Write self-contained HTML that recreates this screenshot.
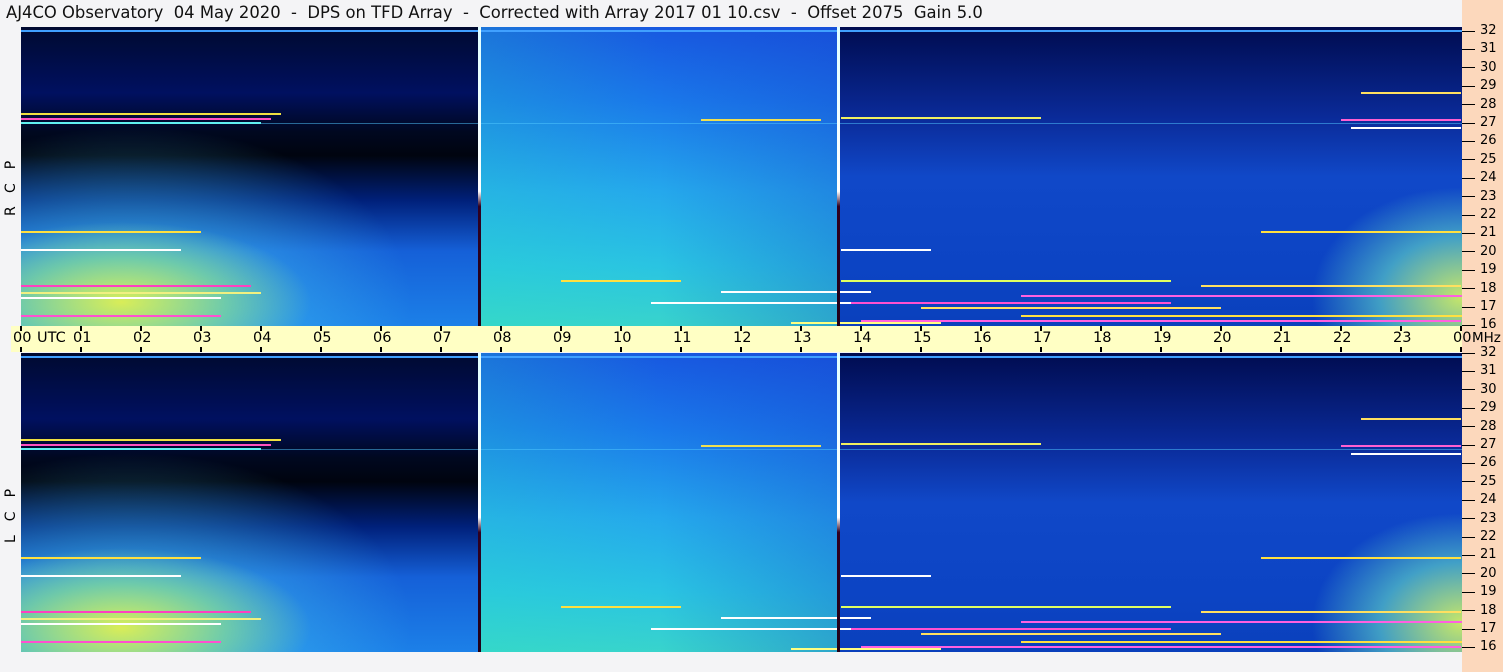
<!DOCTYPE html>
<html><head><meta charset="utf-8"><style>
*{margin:0;padding:0}
body{width:1503px;height:672px;background:#f4f4f6;position:relative;overflow:hidden;font-family:"DejaVu Sans","Liberation Sans",sans-serif}
.t{position:absolute;left:6px;top:3px;font-size:16.4px;color:#111;white-space:pre}
.spec{position:absolute;left:21px;width:1441px;height:299px;overflow:hidden}
.a{position:absolute;left:0;top:0;width:458px;height:100%;
background:
radial-gradient(ellipse 190px 80px at 100px 275px,rgba(225,240,80,.95),rgba(150,230,130,.6) 55%,rgba(60,170,240,0) 100%),
radial-gradient(ellipse 280px 170px at 110px 270px,rgba(70,200,240,.8),rgba(40,120,230,0) 100%),
linear-gradient(#000a30 0%,#001060 22%,#000820 35%,#00040f 43%,#00207a 58%,#1560d8 75%,#1c80e8 100%)}
.b{position:absolute;left:460px;top:0;width:357px;height:100%;
background:linear-gradient(#1858e0 0%,#1a78ea 25%,#25a8ec 55%,#2ac4e2 80%,#38d4cc 100%)}
.b2{position:absolute;left:460px;top:0;width:357px;height:100%;background:linear-gradient(90deg,rgba(40,230,190,.2),rgba(0,0,0,0) 50%,rgba(20,60,200,.3))}
.c{position:absolute;left:819px;top:0;width:622px;height:100%;
background:
radial-gradient(ellipse 150px 110px at 622px 270px,rgba(210,240,100,.95),rgba(100,220,200,.6) 55%,rgba(40,150,240,0) 100%),
linear-gradient(#000c50 0%,#0a2a98 30%,#1048c8 50%,#0c44c4 80%,#0a40bc 100%)}
.vl{position:absolute;top:0;width:3px;height:100%;background:linear-gradient(#e0ffff 0%,#ffffff 55%,#300020 60%,#200018 100%)}
.hl{position:absolute;height:2px}
.tb{position:absolute;left:11px;top:326px;width:1451px;height:26px;background:#ffffc4}
.rp{position:absolute;left:1462px;top:0;width:41px;height:672px;background:#fcd8bc}
.lab{position:absolute;font-size:14.5px;color:#000;top:330px}
.fl{position:absolute;left:1480px;font-size:13px;color:#000}
.tk{position:absolute;background:#000}
.side{position:absolute;left:3px;font-size:14px;transform:rotate(-90deg);transform-origin:left top;letter-spacing:14px;color:#000}
</style></head><body>
<div class="t">AJ4CO Observatory  04 May 2020  -  DPS on TFD Array  -  Corrected with Array 2017 01 10.csv  -  Offset 2075  Gain 5.0</div>
<div class="rp"></div>
<div class="spec" id="s1" style="top:27px"></div>
<div class="spec" id="s2" style="top:353px"></div>
<div class="tb"></div>
<div class="side" style="top:216px">RCP</div>
<div class="side" style="top:543px">LCP</div>
<div id="ax"></div>
<script>
function fill(id){
 var s=document.getElementById(id),h='<div class="a"></div><div class="b"></div><div class="b2"></div><div class="c"></div>';
 h+='<div class="hl" style="left:0;top:3px;width:1441px;background:#40a0ff;height:2px"></div>';
 h+='<div class="hl" style="left:0;top:96px;width:1441px;background:rgba(80,200,255,.5);height:1px"></div>';
 var L=[[0,86,260,'#f0e040'],[0,91,250,'#ff50c0'],[0,95,240,'#60f0f0'],[0,204,180,'#ffe040'],[0,222,160,'#ffffff'],[0,258,230,'#ff40c0'],[0,265,240,'#f0f080'],[0,270,200,'#ffffff'],[0,288,200,'#ff50d0'],[1340,65,100,'#ffe060'],[1320,92,120,'#ff60d0'],[1330,100,110,'#ffffff'],[1240,204,200,'#ffe040'],[1180,258,260,'#ffe060'],[1000,268,441,'#ff60e0'],[1000,288,441,'#ffe040'],[820,222,90,'#ffffff'],[630,275,520,'#ff50d0'],[630,275,200,'#ffffff'],[700,264,150,'#ffffff'],[540,253,120,'#ffe040'],[820,253,330,'#e0ff60'],[770,295,150,'#ffff80'],[680,92,120,'#f0e050'],[820,90,200,'#f0f060'],[900,280,300,'#ffe060'],[840,293,600,'#ff60e0']];
 L.forEach(function(l){h+='<div class="hl" style="left:'+l[0]+'px;top:'+l[1]+'px;width:'+l[2]+'px;background:'+l[3]+'"></div>';});
 h+='<div class="vl" style="left:457px"></div><div class="vl" style="left:816px"></div>';
 s.innerHTML=h;
}
fill('s1');fill('s2');
var a='';
for(var i=0;i<=24;i++){var x=21+i*60;
 a+='<div class="tk" style="left:'+(x-1)+'px;top:326px;width:2px;height:5px"></div><div class="tk" style="left:'+(x-1)+'px;top:347px;width:2px;height:5px"></div>';
 var t=(i%24<10?'0':'')+(i%24);
 a+='<div class="lab" style="left:'+(x-8)+'px">'+t+'</div>';}
a+='<div class="lab" style="left:37px">UTC</div><div class="lab" style="left:1472px;font-size:13.5px">MHz</div>';
[31,353].forEach(function(y0){for(var k=0;k<=16;k++){var y=y0+k*18.4;
 a+='<div class="tk" style="left:1462px;top:'+(y-0.5)+'px;width:13px;height:1px"></div><div class="fl" style="top:'+(y-8)+'px">'+(32-k)+'</div>';}});
document.getElementById('ax').innerHTML=a;
</script>
</body></html>
